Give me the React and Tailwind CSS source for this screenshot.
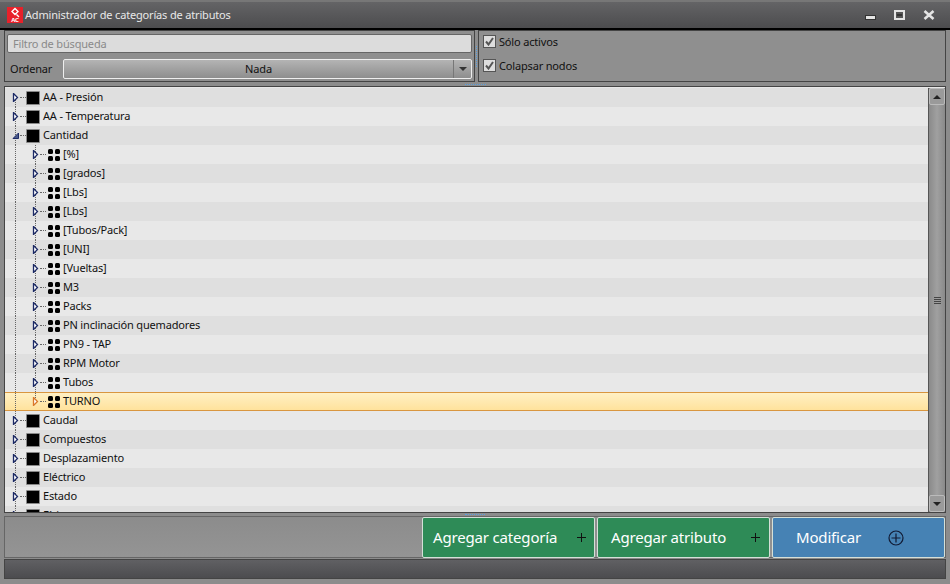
import React from "react";

const rows = [
  { label: "AA - Presión", level: 0, first: true },
  { label: "AA - Temperatura", level: 0 },
  { label: "Cantidad", level: 0, open: true },
  { label: "[%]", level: 1 },
  { label: "[grados]", level: 1 },
  { label: "[Lbs]", level: 1 },
  { label: "[Lbs]", level: 1 },
  { label: "[Tubos/Pack]", level: 1 },
  { label: "[UNI]", level: 1 },
  { label: "[Vueltas]", level: 1 },
  { label: "M3", level: 1 },
  { label: "Packs", level: 1 },
  { label: "PN inclinación quemadores", level: 1 },
  { label: "PN9 - TAP", level: 1 },
  { label: "RPM Motor", level: 1 },
  { label: "Tubos", level: 1 },
  { label: "TURNO", level: 1, selected: true },
  { label: "Caudal", level: 0 },
  { label: "Compuestos", level: 0 },
  { label: "Desplazamiento", level: 0 },
  { label: "Eléctrico", level: 0 },
  { label: "Estado", level: 0 },
  { label: "Físico", level: 0 },
];

function Expander({ open, selected }) {
  const color = selected ? "#d9782a" : "#1c2a66";
  return (
    <svg width="7" height="9" viewBox="0 0 7 9" className="shrink-0">
      {open ? (
        <path d="M1 7.5 L6.5 7.5 L6.5 2 Z" fill="#4a5a8a" stroke={color} />
      ) : (
        <path d="M1.5 0.5 L5.5 4.5 L1.5 8.5 Z" fill="#fff" stroke={color} strokeWidth="1.3" />
      )}
    </svg>
  );
}

function TreeRow({ row, index, last }) {
  const bg = row.selected
    ? "border-y border-[#d9963f] bg-gradient-to-b from-[#fff0c4] to-[#ffe29c]"
    : index % 2 === 0
      ? "bg-[#dfdfdf]"
      : "bg-[#e8e8e8]";
  const child = row.level === 1;
  return (
    <div className={`relative flex h-[19px] shrink-0 items-center ${bg}`}>
      {row.first ? (
        <span className="absolute bottom-0 left-[10px] top-[10px] border-l border-dotted border-[#666]" />
      ) : (
        <span className="absolute bottom-0 left-[10px] top-0 border-l border-dotted border-[#666]" />
      )}
      {child && !last && (
        <span className="absolute bottom-0 left-[30px] top-0 border-l border-dotted border-[#666]" />
      )}
      {child && last && (
        <span className="absolute left-[30px] top-0 h-[9px] border-l border-dotted border-[#666]" />
      )}
      <div className={`relative flex items-center ${child ? "ml-[27px]" : "ml-[7px]"}`}>
        <Expander open={row.open} selected={row.selected} />
        <span className="ml-[1px] w-[6px] border-t border-dotted border-[#666]" />
        {child ? (
          <span className="ml-[2px] grid h-[12px] w-[12px] grid-cols-2 gap-[2px]">
            <i className="rounded-[1.5px] bg-black" />
            <i className="rounded-[1.5px] bg-black" />
            <i className="rounded-[1.5px] bg-black" />
            <i className="rounded-[1.5px] bg-black" />
          </span>
        ) : (
          <span className="h-[14px] w-[14px] rounded-[1px] border border-[#888] bg-black" />
        )}
        <span className="ml-[3px] whitespace-nowrap text-[11px] text-[#111]">{row.label}</span>
      </div>
    </div>
  );
}

function Check({ label }) {
  return (
    <label className="flex items-center gap-[3px] text-[11px] leading-[13px] text-[#111]">
      <span className="flex h-[13px] w-[13px] items-center justify-center border border-[#555] bg-[#ddd]">
        <svg width="9" height="9" viewBox="0 0 9 9">
          <path d="M1 4.5 L3.5 7.5 L8 1" fill="none" stroke="#555" strokeWidth="2" />
        </svg>
      </span>
      {label}
    </label>
  );
}

function ActionButton({ label, color, children, textClass }) {
  return (
    <button className={`flex h-[41px] w-[173px] items-center rounded-[2px] border border-[#d5e0d8] text-[15px] text-white ${color}`}>
      <span className={textClass}>{label}</span>
      {children}
    </button>
  );
}

export default function App() {
  const lastChild = rows.map((r) => r.level).lastIndexOf(1);
  return (
    <div className="flex h-[584px] w-[950px] flex-col overflow-hidden bg-[#8c8c8c] font-['Noto_Sans',sans-serif] tracking-[-0.17px]">
      <div className="flex h-[30px] shrink-0 items-center border-b-2 border-t-2 border-b-black border-t-[#777] bg-gradient-to-b from-[#646466] to-[#4c4c4e] pl-[7px]">
        <svg width="16" height="16" viewBox="0 0 16 16" className="shrink-0">
          <rect width="16" height="16" fill="#e8212a" />
          <path d="M8 1.5 L11 4.5 L8 7.5 L5 4.5 Z M9.5 7.5 L12 10" fill="none" stroke="#fff" strokeWidth="1.4" />
          <text x="8" y="15" textAnchor="middle" fontSize="6" fontWeight="700" fill="#fff">AC</text>
        </svg>
        <span className="ml-[2px] text-[11px] text-[#e8e8e8]">Administrador de categorías de atributos</span>
        <div className="ml-auto mr-[15px] flex items-center gap-[18px]">
          <span className="mt-[5px] h-[5px] w-[11px] border border-[#333] bg-[#e4e4e4]" />
          <span className="flex h-[10px] w-[11px] items-center justify-center border-2 border-[#e4e4e4] bg-[#555]">
            <i className="h-[2px] w-[5px] bg-[#333]" />
          </span>
          <svg width="12" height="10" viewBox="0 0 12 10">
            <path d="M1.5 1 L10.5 9 M10.5 1 L1.5 9" stroke="#e4e4e4" strokeWidth="2.6" />
          </svg>
        </div>
      </div>

      <div className="flex h-[52px] shrink-0 px-[4px]">
        <div className="flex w-[471px] flex-col border border-[#444] bg-[#8f8f8f] px-[2px] pt-[3px]">
          <input
            readOnly
            value=""
            placeholder="Filtro de búsqueda"
            className="h-[19px] w-full rounded-[2px] border border-[#666] bg-[#dcdcdc] px-[5px] text-[11px] placeholder:text-[#8a8a8a]"
          />
          <div className="mt-[6px] flex items-center">
            <span className="w-[56px] pl-[3px] text-[11px] text-[#111]">Ordenar</span>
            <div className="flex h-[20px] flex-1 items-center rounded-[2px] border border-[#eee] bg-gradient-to-b from-[#b4b4b4] to-[#8e8e8e]">
              <span className="flex-1 text-center text-[11px] text-[#111]">Nada</span>
              <span className="flex h-full w-[18px] items-center justify-center border-l border-[#777]">
                <i className="border-x-[4px] border-t-[4px] border-x-transparent border-t-[#333]" />
              </span>
            </div>
          </div>
        </div>
        <div className="flex w-[3px] shrink-0 items-center justify-center">
          <span className="h-[21px] border-l border-dotted border-[#5aa0e0]" />
        </div>
        <div className="flex flex-1 flex-col gap-[11px] border border-[#444] bg-[#8f8f8f] px-[4px] pt-[4px]">
          <Check label="Sólo activos" />
          <Check label="Colapsar nodos" />
        </div>
      </div>

      <div className="flex h-[4px] shrink-0 items-center justify-center">
        <span className="w-[21px] border-t border-dotted border-[#5aa0e0]" />
      </div>

      <div className="mx-[4px] flex h-[427px] shrink-0 border border-[#444] bg-[#e8e8e8] pt-[1px]">
        <div className="flex min-w-0 flex-1 flex-col overflow-hidden">
          {rows.map((row, i) => (
            <TreeRow key={i} row={row} index={i} last={i === lastChild} />
          ))}
        </div>
        <div className="flex w-[17px] shrink-0 flex-col border-l border-[#555] bg-gradient-to-r from-[#8a8a8a] via-[#a0a0a0] to-[#8a8a8a]">
          <span className="flex h-[17px] items-center justify-center rounded-[2px] border border-[#bbb] bg-[#9a9a9a]">
            <i className="border-x-[4px] border-b-[4px] border-x-transparent border-b-[#222]" />
          </span>
          <span className="flex flex-1 flex-col items-center justify-center gap-[1px]">
            <i className="h-[1px] w-[7px] bg-[#444]" />
            <i className="h-[1px] w-[7px] bg-[#444]" />
            <i className="h-[1px] w-[7px] bg-[#444]" />
            <i className="h-[1px] w-[7px] bg-[#444]" />
          </span>
          <span className="flex h-[17px] items-center justify-center rounded-[2px] border border-[#bbb] bg-[#9a9a9a]">
            <i className="border-x-[4px] border-t-[4px] border-x-transparent border-t-[#222]" />
          </span>
        </div>
      </div>

      <div className="flex h-[3px] shrink-0 items-center justify-center">
        <span className="w-[20px] border-t border-dotted border-[#5aa0e0]" />
      </div>

      <div className="mx-[4px] flex h-[42px] shrink-0 justify-end gap-[2px] border border-[#666] bg-gradient-to-b from-[#8c8c8c] to-[#949494]">
        <ActionButton label="Agregar categoría" color="bg-[#2e8b57]" textClass="ml-[10px]">
          <svg width="11" height="11" viewBox="0 0 11 11" className="ml-auto mr-[7px]">
            <path d="M5.5 1 V10 M1 5.5 H10" stroke="#111" />
          </svg>
        </ActionButton>
        <ActionButton label="Agregar atributo" color="bg-[#2e8b57]" textClass="ml-[13px]">
          <svg width="11" height="11" viewBox="0 0 11 11" className="ml-auto mr-[8px]">
            <path d="M5.5 1 V10 M1 5.5 H10" stroke="#111" />
          </svg>
        </ActionButton>
        <ActionButton label="Modificar" color="bg-[#4682b4]" textClass="ml-[23px]">
          <svg width="16" height="16" viewBox="0 0 16 16" className="ml-[27px]">
            <circle cx="8" cy="8" r="7" fill="none" stroke="#111a33" strokeWidth="1.2" />
            <path d="M8 3.5 V12.5 M3.5 8 H12.5" stroke="#111a33" strokeWidth="1.2" />
          </svg>
        </ActionButton>
      </div>

      <div className="mx-[4px] mt-[1px] h-[20px] shrink-0 border border-[#444] bg-gradient-to-b from-[#606063] to-[#4c4c4f]" />
    </div>
  );
}
